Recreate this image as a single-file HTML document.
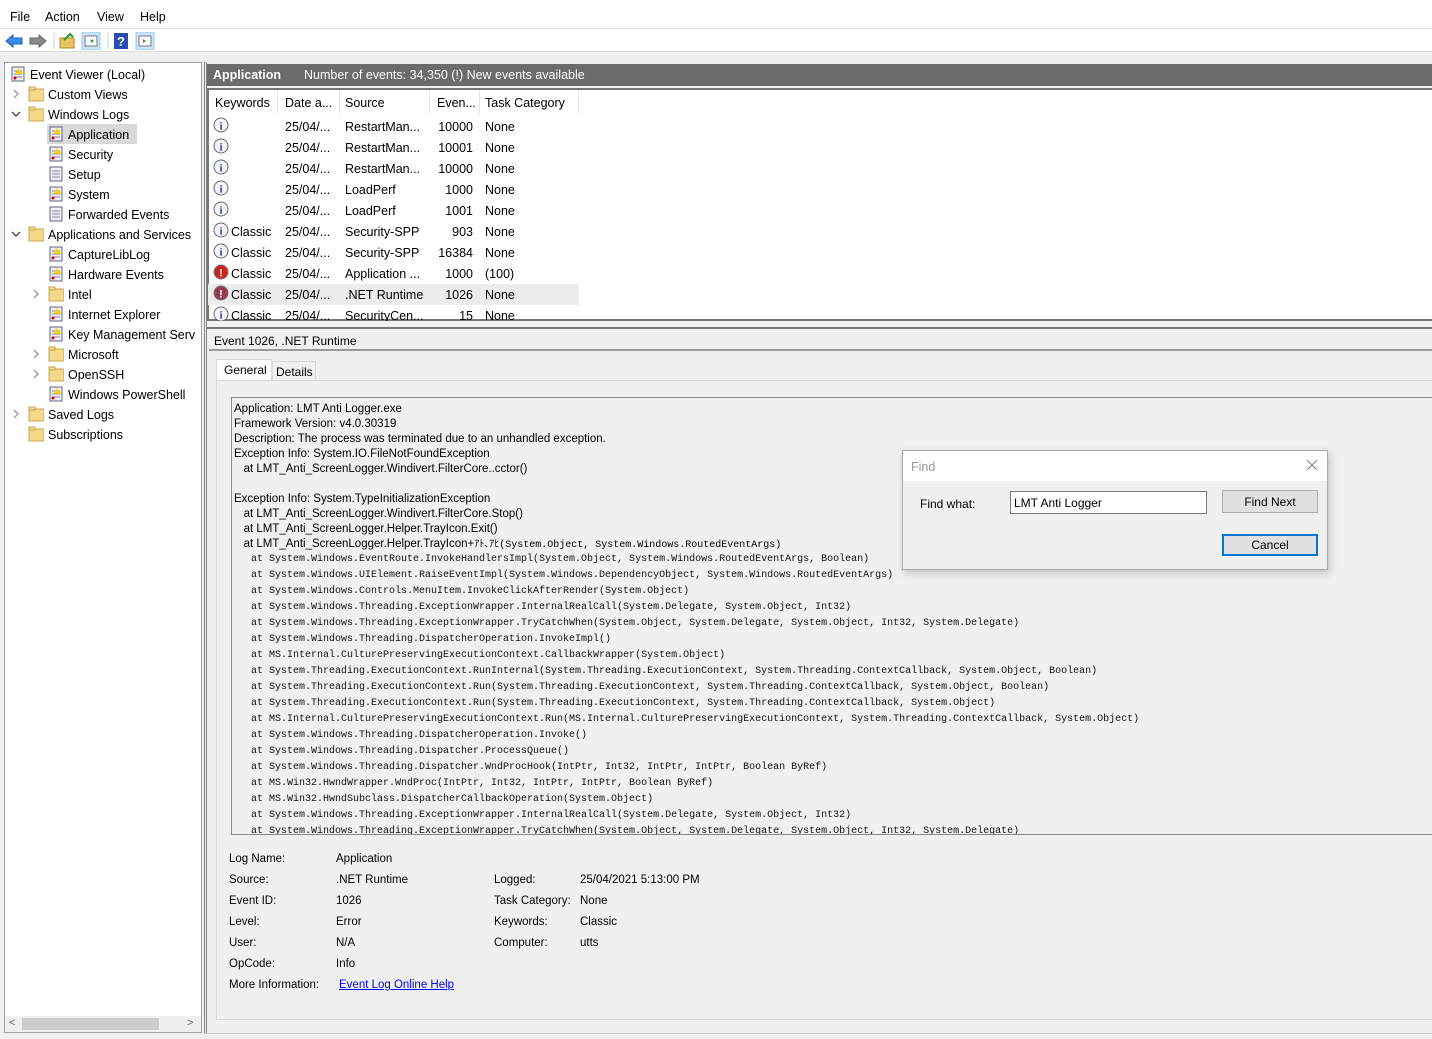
<!DOCTYPE html>
<html><head><meta charset="utf-8">
<style>
*{margin:0;padding:0;box-sizing:border-box}
body{width:1432px;height:1039px;overflow:hidden;background:#f0f0f0;font-family:"Liberation Sans","Noto Sans CJK JP",sans-serif;font-size:12px;color:#000;position:relative}
.a{position:absolute;white-space:nowrap}
.tr{position:absolute;height:20px;line-height:20px;font-size:12.5px;white-space:nowrap}
.ic{position:absolute;width:16px;height:16px}
.row{position:absolute;left:208px;height:21px;line-height:21px;font-size:12.5px;width:371px}
.row span{position:absolute;top:1px}
.m{font-family:"Liberation Mono",monospace;font-size:10px;letter-spacing:0;position:absolute;left:251px;white-space:pre;line-height:16px;font-weight:500;color:#111}
.p{position:absolute;left:234px;white-space:pre;font-size:11.5px;line-height:15px}
.lbl{position:absolute;font-size:11.5px;white-space:nowrap}
</style></head><body>
<div class="a" style="left:0;top:0;width:1432px;height:29px;background:#fff;border-bottom:1px solid #e3e3e3"></div>
<div class="a" style="left:10px;top:10px;font-size:12.5px">File</div>
<div class="a" style="left:45px;top:10px;font-size:12.5px">Action</div>
<div class="a" style="left:97px;top:10px;font-size:12.5px">View</div>
<div class="a" style="left:140px;top:10px;font-size:12.5px">Help</div>
<div class="a" style="left:0;top:29px;width:1432px;height:23px;background:#fff;border-bottom:1px solid #dcdcdc"></div>
<svg class="a" style="left:4px;top:32px" width="160" height="18">
<path d="M2 9 L9 3 L9 6 L18 6 L18 12 L9 12 L9 15 Z" fill="#3a8ee6" stroke="#1e64b4"/>
<path d="M42 9 L35 3 L35 6 L26 6 L26 12 L35 12 L35 15 Z" fill="#8a8a8a" stroke="#666"/>
<line x1="50" y1="1" x2="50" y2="17" stroke="#ccc"/>
<rect x="56" y="6" width="14" height="10" fill="#e8c560" stroke="#b08b2b"/><path d="M60 8 L66 2 L69 5" stroke="#2a9a2a" stroke-width="2" fill="none"/>
<rect x="78" y="0" width="18" height="18" fill="#cce4f7" stroke="#99c9ef"/><rect x="81" y="4" width="12" height="10" fill="#fff" stroke="#778"/><path d="M89 7 L86 9 L89 11Z" fill="#2a9a2a"/>
<line x1="104" y1="1" x2="104" y2="17" stroke="#ccc"/>
<rect x="110" y="1" width="14" height="16" fill="#2a4fb0"/><text x="113" y="14" fill="#fff" font-size="13" font-weight="bold" font-family="Liberation Sans">?</text>
<rect x="132" y="0" width="18" height="18" fill="#cce4f7" stroke="#99c9ef"/><rect x="135" y="4" width="12" height="10" fill="#fff" stroke="#778"/><path d="M139 7 L142 9 L139 11Z" fill="#2a9a2a"/>
</svg>
<div class="a" style="left:4px;top:62px;width:198px;height:971px;background:#fff;border:1px solid #a0a0a0"></div>
<div class="a" style="left:5px;top:1016px;width:196px;height:16px;background:#f0f0f0"></div>
<div class="a" style="left:22px;top:1018px;width:137px;height:12px;background:#cdcdcd"></div>
<div class="a" style="left:9px;top:1017px;color:#666;font-size:11px">&lt;</div>
<div class="a" style="left:187px;top:1017px;color:#666;font-size:11px">&gt;</div>
<div class="a" style="left:47px;top:124px;width:90px;height:20px;background:#d9d9d9"></div>
<div id="tree"></div>
<div class="a" style="left:204px;top:62px;width:1228px;height:971px;background:#f0f0f0;border-left:3px double #808080"></div>
<div class="a" style="left:207px;top:64px;width:1225px;height:22px;background:#6b6b6b"></div>
<div class="a" style="left:213px;top:68px;color:#fff;font-weight:bold;font-size:12.5px">Application</div>
<div class="a" style="left:304px;top:68px;color:#fff;font-size:12.5px">Number of events: 34,350 (!) New events available</div>
<div class="a" style="left:207px;top:88px;width:1225px;height:233px;background:#fff;border:2px solid #777;border-right:none"></div>
<div class="a" style="left:209px;top:90px;width:370px;height:24px;font-size:12.5px;line-height:27px">
<span class="a" style="left:6px">Keywords</span><span class="a" style="left:68px;top:0;height:24px;border-left:1px solid #e5e5e5"></span>
<span class="a" style="left:76px">Date a...</span><span class="a" style="left:130px;height:24px;border-left:1px solid #e5e5e5"></span>
<span class="a" style="left:136px">Source</span><span class="a" style="left:220px;height:24px;border-left:1px solid #e5e5e5"></span>
<span class="a" style="left:228px">Even...</span><span class="a" style="left:270px;height:24px;border-left:1px solid #e5e5e5"></span>
<span class="a" style="left:276px">Task Category</span><span class="a" style="left:369px;height:24px;border-left:1px solid #e5e5e5"></span>
</div>
<div id="rows"></div>
<div class="a" style="left:207px;top:321px;width:1225px;height:8px;background:#f0f0f0;border-bottom:2px solid #777"></div>
<div class="a" style="left:209px;top:330px;width:1223px;height:21px;border-bottom:2px solid #999"></div>
<div class="a" style="left:214px;top:334px;font-size:12px">Event 1026, .NET Runtime</div>
<div class="a" style="left:216px;top:359px;width:56px;height:22px;background:#fff;border:1px solid #d9d9d9;border-bottom:none"></div>
<div class="a" style="left:224px;top:363px;font-size:12px">General</div>
<div class="a" style="left:272px;top:361px;width:44px;height:20px;border:1px solid #d9d9d9;background:#f0f0f0"></div>
<div class="a" style="left:276px;top:365px;font-size:12px">Details</div>
<div class="a" style="left:216px;top:380px;width:1216px;height:640px;border:1px solid #d9d9d9;border-right:none"></div>
<div class="a" style="left:231px;top:397px;width:1201px;height:438px;border:1px solid #888;border-right:none;overflow:hidden">
<div class="p" style="left:2px;top:4px">Application: LMT Anti Logger.exe
Framework Version: v4.0.30319
Description: The process was terminated due to an unhandled exception.
Exception Info: System.IO.FileNotFoundException
   at LMT_Anti_ScreenLogger.Windivert.FilterCore..cctor()

Exception Info: System.TypeInitializationException
   at LMT_Anti_ScreenLogger.Windivert.FilterCore.Stop()
   at LMT_Anti_ScreenLogger.Helper.TrayIcon.Exit()
   at LMT_Anti_ScreenLogger.Helper.TrayIcon+<span style="font-family:'Liberation Mono','Noto Sans CJK JP',monospace;font-size:10px">ｱﾄ､ｱﾋ(System.Object, System.Windows.RoutedEventArgs)</span></div>
<div class="m" style="left:19px;top:154px">at System.Windows.EventRoute.InvokeHandlersImpl(System.Object, System.Windows.RoutedEventArgs, Boolean)
at System.Windows.UIElement.RaiseEventImpl(System.Windows.DependencyObject, System.Windows.RoutedEventArgs)
at System.Windows.Controls.MenuItem.InvokeClickAfterRender(System.Object)
at System.Windows.Threading.ExceptionWrapper.InternalRealCall(System.Delegate, System.Object, Int32)
at System.Windows.Threading.ExceptionWrapper.TryCatchWhen(System.Object, System.Delegate, System.Object, Int32, System.Delegate)
at System.Windows.Threading.DispatcherOperation.InvokeImpl()
at MS.Internal.CulturePreservingExecutionContext.CallbackWrapper(System.Object)
at System.Threading.ExecutionContext.RunInternal(System.Threading.ExecutionContext, System.Threading.ContextCallback, System.Object, Boolean)
at System.Threading.ExecutionContext.Run(System.Threading.ExecutionContext, System.Threading.ContextCallback, System.Object, Boolean)
at System.Threading.ExecutionContext.Run(System.Threading.ExecutionContext, System.Threading.ContextCallback, System.Object)
at MS.Internal.CulturePreservingExecutionContext.Run(MS.Internal.CulturePreservingExecutionContext, System.Threading.ContextCallback, System.Object)
at System.Windows.Threading.DispatcherOperation.Invoke()
at System.Windows.Threading.Dispatcher.ProcessQueue()
at System.Windows.Threading.Dispatcher.WndProcHook(IntPtr, Int32, IntPtr, IntPtr, Boolean ByRef)
at MS.Win32.HwndWrapper.WndProc(IntPtr, Int32, IntPtr, IntPtr, Boolean ByRef)
at MS.Win32.HwndSubclass.DispatcherCallbackOperation(System.Object)
at System.Windows.Threading.ExceptionWrapper.InternalRealCall(System.Delegate, System.Object, Int32)
at System.Windows.Threading.ExceptionWrapper.TryCatchWhen(System.Object, System.Delegate, System.Object, Int32, System.Delegate)</div>
</div>
<div class="lbl" style="left:229px;top:853px">Log Name:</div><div class="lbl" style="left:336px;top:853px">Application</div>
<div class="lbl" style="left:229px;top:874px">Source:</div><div class="lbl" style="left:336px;top:874px">.NET Runtime</div>
<div class="lbl" style="left:229px;top:895px">Event ID:</div><div class="lbl" style="left:336px;top:895px">1026</div>
<div class="lbl" style="left:229px;top:916px">Level:</div><div class="lbl" style="left:336px;top:916px">Error</div>
<div class="lbl" style="left:229px;top:937px">User:</div><div class="lbl" style="left:336px;top:937px">N/A</div>
<div class="lbl" style="left:229px;top:958px">OpCode:</div><div class="lbl" style="left:336px;top:958px">Info</div>
<div class="lbl" style="left:229px;top:979px">More Information:</div><div class="lbl" style="left:339px;top:979px;color:#00f;text-decoration:underline">Event Log Online Help</div>
<div class="lbl" style="left:494px;top:874px">Logged:</div><div class="lbl" style="left:580px;top:874px">25/04/2021 5:13:00 PM</div>
<div class="lbl" style="left:494px;top:895px">Task Category:</div><div class="lbl" style="left:580px;top:895px">None</div>
<div class="lbl" style="left:494px;top:916px">Keywords:</div><div class="lbl" style="left:580px;top:916px">Classic</div>
<div class="lbl" style="left:494px;top:937px">Computer:</div><div class="lbl" style="left:580px;top:937px">utts</div>
<div class="a" style="left:204px;top:1033px;width:1228px;height:6px;border-top:1px solid #ccc;background:#f0f0f0"></div>
<div class="a" style="left:902px;top:450px;width:426px;height:120px;background:#f0f0f0;border:1px solid #aaa;box-shadow:2px 3px 8px rgba(0,0,0,.2)"></div>
<div class="a" style="left:903px;top:451px;width:424px;height:30px;background:#fff"></div>
<div class="a" style="left:911px;top:460px;color:#999;font-size:12.5px">Find</div>
<svg class="a" style="left:1306px;top:459px" width="12" height="12"><path d="M1 1L11 11M11 1L1 11" stroke="#888" stroke-width="1.2"/></svg>
<div class="a" style="left:920px;top:497px;font-size:12px">Find what:</div>
<div class="a" style="left:1010px;top:491px;width:197px;height:23px;background:#fff;border:1px solid #7a7a7a"></div>
<div class="a" style="left:1014px;top:496px;font-size:12px">LMT Anti Logger</div>
<div class="a" style="left:1222px;top:490px;width:96px;height:23px;background:#e1e1e1;border:1px solid #adadad;text-align:center;line-height:22px;font-size:12px">Find Next</div>
<div class="a" style="left:1222px;top:534px;width:96px;height:22px;background:#e1e1e1;border:2px solid #0078d7;text-align:center;line-height:19px;font-size:12px">Cancel</div>
<script>
var t=[[0,74,'Event Viewer (Local)',0,'ev'],[1,94,'Custom Views','>','fold'],[1,114,'Windows Logs','v','fold'],[2,134,'Application',0,'log'],[2,154,'Security',0,'log'],[2,174,'Setup',0,'log2'],[2,194,'System',0,'log'],[2,214,'Forwarded Events',0,'log2'],[1,234,'Applications and Services','v','fold'],[2,254,'CaptureLibLog',0,'log'],[2,274,'Hardware Events',0,'log'],[2,294,'Intel','>','fold'],[2,314,'Internet Explorer',0,'log'],[2,334,'Key Management Serv',0,'log'],[2,354,'Microsoft','>','fold'],[2,374,'OpenSSH','>','fold'],[2,394,'Windows PowerShell',0,'log'],[1,414,'Saved Logs','>','fold'],[1,434,'Subscriptions',0,'fold']];
var h='';
t.forEach(function(r){var x=r[0]==0?10:r[0]==1?28:48;var y=r[1]-10;
if(r[3])h+='<svg class="a" style="left:'+(x-17)+'px;top:'+(y+5)+'px" width="10" height="10"><path d="'+(r[3]=='v'?'M1 3L5 7L9 3':'M3 1L7 5L3 9')+'" stroke="'+(r[3]=='v'?'#444':'#999')+'" stroke-width="1.3" fill="none"/></svg>';
var ic=r[4]=='fold'?'<rect x="1" y="3" width="15" height="12" fill="#f4d98a" stroke="#c9a84a"/><rect x="1" y="1" width="6" height="3" fill="#f4d98a" stroke="#c9a84a"/>':'<rect x="2" y="1" width="12" height="14" fill="#eef" stroke="#667"/><line x1="4" y1="5" x2="12" y2="5" stroke="#889"/><line x1="4" y1="8" x2="12" y2="8" stroke="#889"/><line x1="4" y1="11" x2="12" y2="11" stroke="#889"/>'+(r[4]=='log2'?'':'<path d="M9 2 L13 8 L5 8Z" fill="#f5d000"/><circle cx="5" cy="12" r="1.5" fill="#c00"/>');
h+='<svg class="ic" style="left:'+x+'px;top:'+(y+2)+'px" viewBox="0 0 16 16">'+ic+'</svg>';
h+='<div class="tr" style="left:'+(x+20)+'px;top:'+(y+1)+'px">'+r[2]+'</div>';});
document.getElementById('tree').innerHTML=h;
var R=[['','RestartMan...','10000','None',0],['','RestartMan...','10001','None',0],['','RestartMan...','10000','None',0],['','LoadPerf','1000','None',0],['','LoadPerf','1001','None',0],['Classic','Security-SPP','903','None',0],['Classic','Security-SPP','16384','None',0],['Classic','Application ...','1000','(100)',1],['Classic','.NET Runtime','1026','None',2],['Classic','SecurityCen...','15','None',0]];
h='';
R.forEach(function(r,i){var y=116+i*21;
var c=r[4]==0?'<circle cx="8" cy="8" r="7" fill="#f4f4f8" stroke="#667"/><text x="8" y="12.5" text-anchor="middle" font-size="11" font-weight="bold" fill="#2446a8" font-family="Liberation Serif">i</text>':'<circle cx="8" cy="8" r="7" fill="'+(r[4]==1?'#d42020':'#9a3850')+'" stroke="#777"/><text x="8" y="12.5" text-anchor="middle" font-size="11" font-weight="bold" fill="#fff" font-family="Liberation Sans">!</text>';
h+='<div class="row" style="top:'+y+'px;'+(r[4]==2?'background:#ececec':'')+'"><svg style="position:absolute;left:5px;top:1px" width="16" height="16">'+c+'</svg><span style="left:23px">'+r[0]+'</span><span style="left:77px">25/04/...</span><span style="left:137px">'+r[1]+'</span><span style="right:106px;text-align:right">'+r[2]+'</span><span style="left:277px">'+r[3]+'</span></div>';});
document.getElementById('rows').innerHTML=h;
</script>
</body></html>
